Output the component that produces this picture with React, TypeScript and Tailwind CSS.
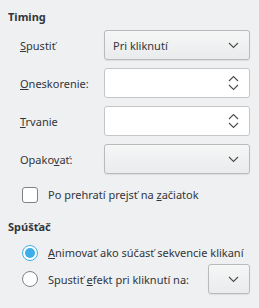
import React from 'react';

const Chevron = () => (
  <svg width="11" height="7" viewBox="0 0 11 7" className="text-[#4d4d4d]">
    <path d="M1 1 L5.5 5.5 L10 1" fill="none" stroke="currentColor" strokeWidth="1.1" />
  </svg>
);

const Spin = () => (
  <svg width="11" height="16" viewBox="0 0 11 16" className="text-[#4d4d4d]">
    <path d="M1 6 L5.5 1.5 L10 6" fill="none" stroke="currentColor" strokeWidth="1.1" />
    <path d="M1 10 L5.5 14.5 L10 10" fill="none" stroke="currentColor" strokeWidth="1.1" />
  </svg>
);

function Combo({ text, className = '' }: { text?: string; className?: string }) {
  return (
    <div
      className={`h-[30px] flex items-center justify-between pl-[8px] pr-[10px] rounded-[3px] border border-[#b8babc] bg-gradient-to-b from-[#f5f6f6] to-[#eaebec] shadow-[0_1px_1px_rgba(0,0,0,0.08)] ${className}`}
    >
      <span>{text}</span>
      <Chevron />
    </div>
  );
}

function SpinBox() {
  return (
    <div className="h-[30px] flex items-center justify-end pr-[10px] rounded-[3px] border border-[#c4c6c8] bg-white">
      <Spin />
    </div>
  );
}

function Row({ label, children }: { label: React.ReactNode; children: React.ReactNode }) {
  return (
    <div className="flex items-center">
      <div className="w-[96px] pl-[12px] whitespace-nowrap">{label}</div>
      <div className="flex-1">{children}</div>
    </div>
  );
}

export default function App() {
  return (
    <div
      className="w-[259px] h-[308px] bg-[#eff0f1] text-[#31363b] text-[11px] leading-[17px] pl-[8px] pr-[9px] pt-[8px] whitespace-nowrap"
      style={{ fontFamily: '"Noto Sans", "DejaVu Sans", sans-serif' }}
    >
      <div className="font-bold">Timing</div>
      <div className="flex flex-col gap-[8px] mt-[5px]">
        <Row label={<span><u>S</u>pustiť</span>}>
          <Combo text="Pri kliknutí" />
        </Row>
        <Row label={<span><u>O</u>neskorenie:</span>}>
          <SpinBox />
        </Row>
        <Row label={<span><u>T</u>rvanie</span>}>
          <SpinBox />
        </Row>
        <Row label={<span>Opako<u>v</u>ať:</span>}>
          <Combo />
        </Row>
      </div>
      <div className="flex items-center mt-[12px] pl-[14px]">
        <div className="w-[16px] h-[16px] rounded-[3px] border border-[#7f8183] bg-white shrink-0" />
        <span className="ml-[10px]">Po prehratí prejsť na <u>z</u>ačiatok</span>
      </div>
      <div className="font-bold mt-[15px]">Spúšťač</div>
      <div className="flex items-center mt-[9px] pl-[14px]">
        <div className="w-[16px] h-[16px] rounded-full border border-[#3daee9] bg-white flex items-center justify-center shrink-0">
          <div className="w-[10px] h-[10px] rounded-full bg-[#3daee9]" />
        </div>
        <span className="ml-[10px]"><u>A</u>nimovať ako súčasť sekvencie klikaní</span>
      </div>
      <div className="flex items-center mt-[3px] pl-[14px]">
        <div className="w-[16px] h-[16px] rounded-full border border-[#7f8183] bg-white shrink-0" />
        <span className="ml-[10px] flex-1">Spustiť <u>e</u>fekt pri kliknutí na:</span>
        <Combo className="w-[42px] pr-[9px] !justify-end shrink-0" />
      </div>
    </div>
  );
}
